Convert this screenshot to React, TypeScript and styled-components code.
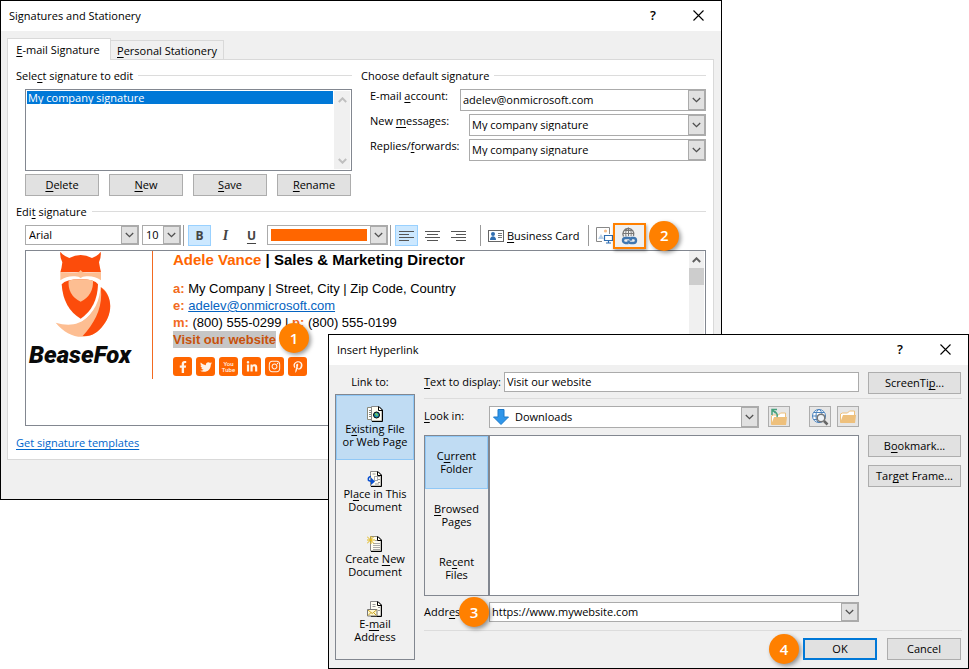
import React from "react";
import styled, { createGlobalStyle, css } from "styled-components";
import { FaFacebookF, FaTwitter, FaLinkedinIn, FaInstagram, FaPinterestP } from "react-icons/fa";

const GlobalStyle = createGlobalStyle`
  *, *::before, *::after { box-sizing: border-box; }
  body { margin: 0; background: #fff; }
  body, button, input, select {
    font-family: "Open Sans", "Noto Sans", sans-serif;
    font-size: 11px;
    line-height: 13px;
    color: #000;
  }
  u { text-underline-offset: 2px; text-decoration-thickness: 1px; text-decoration-skip-ink: none; }
`;

const Desktop = styled.main`
  display: grid;
  grid-template-columns: 328px minmax(0, 1fr) 247px;
  grid-template-rows: 334px 166px auto;
`;

const Window = styled.section<{ $front?: boolean }>`
  grid-column: ${(p) => (p.$front ? "2 / 4" : "1 / 3")};
  grid-row: ${(p) => (p.$front ? "2 / 4" : "1 / 3")};
  z-index: ${(p) => (p.$front ? 2 : 1)};
  min-width: 0;
  border: 1px solid #000;
  background: #f0f0f0;
`;

const TitleBar = styled.header`
  display: flex;
  align-items: center;
  height: 30px;
  padding: 0 13px 1px 8px;
  background: #fff;
`;

const WindowTitle = styled.h1`
  flex: 1;
  margin: 0;
  font-size: 11px;
  font-weight: 400;
`;

const TitleButton = styled.button`
  display: grid;
  place-items: center;
  width: 20px;
  height: 20px;
  padding: 0;
  border: 0;
  background: none;
  font-size: 13px;
  font-weight: 600;
  & + & { margin-left: 25px; }
`;

const SignatureBody = styled.div`
  padding: 7px 7px 39px 6px;
`;

const Tabs = styled.div`
  display: flex;
  align-items: flex-end;
  height: 21px;
`;

const Tab = styled.button<{ $active?: boolean }>`
  position: relative;
  height: ${(p) => (p.$active ? 22 : 19)}px;
  width: ${(p) => (p.$active ? 104 : 113)}px;
  margin: 0 0 ${(p) => (p.$active ? -1 : 0)}px;
  padding: ${(p) => (p.$active ? "0 2px 0 0" : "0")};
  border: 1px solid #d9d9d9;
  border-left-width: ${(p) => (p.$active ? 1 : 0)}px;
  border-bottom: 0;
  background: ${(p) => (p.$active ? "#fff" : "#f0f0f0")};
  white-space: nowrap;
`;

const Panel = styled.div`
  padding: 9px 7px 10px 8px;
  border: 1px solid #d9d9d9;
  background: #fff;
`;

const Columns = styled.div`
  display: grid;
  grid-template-columns: 336fr 345fr;
  gap: 9px;
  margin-bottom: 9px;
`;

const GroupTitle = styled.h2`
  display: flex;
  align-items: center;
  gap: 5px;
  margin: 0 0 7px;
  font-size: 11px;
  font-weight: 400;
  white-space: pre;
  &::after { content: ""; flex: 1; height: 1px; background: #dcdcdc; }
`;

const Indent = styled.div`
  padding-left: 9px;
`;

const ListBox = styled.div`
  display: flex;
  height: 82px;
  margin-bottom: 3px;
  padding: 1px;
  border: 1px solid #828790;
`;

const ListItems = styled.ul`
  flex: 1;
  margin: 0 1px 0 0;
  padding: 0;
  list-style: none;
`;

const ListItem = styled.li`
  padding-left: 1px;
  background: #0078d7;
  color: #fff;
`;

const ScrollBar = styled.div<{ $faded?: boolean }>`
  display: flex;
  flex-direction: column;
  justify-content: space-between;
  width: ${(p) => (p.$faded ? 16 : 15)}px;
  background: #f0f0f0;
  color: ${(p) => (p.$faded ? "#bfbfbf" : "#606060")};
`;

const ScrollArrow = styled.button`
  display: grid;
  place-items: center;
  height: 17px;
  padding: 0;
  border: 0;
  background: none;
  color: inherit;
`;

const ScrollThumb = styled.div`
  height: 17px;
  margin-bottom: auto;
  background: #cdcdcd;
`;

const ButtonRow = styled.div`
  display: grid;
  grid-template-columns: repeat(4, 1fr);
  gap: 10px;
  padding-right: 1px;
`;

const PushButton = styled.button<{ $primary?: boolean; $fixed?: boolean }>`
  height: 22px;
  padding: 0 0 2px;
  border: ${(p) => (p.$primary ? "2px solid #0078d7" : "1px solid #adadad")};
  background: #e1e1e1;
  white-space: nowrap;
  ${(p) => p.$fixed && css`width: 74px;`}
`;

const DefaultRow = styled.div<{ $wide?: boolean }>`
  display: grid;
  grid-template-columns: ${(p) => (p.$wide ? 90 : 99)}px minmax(0, 1fr);
  margin-bottom: 3px;
`;

const RowLabel = styled.label`
  white-space: nowrap;
`;

const ComboFrame = styled.div<{ $h?: number; $w?: number }>`
  display: grid;
  align-self: flex-start;
  ${(p) => (p.$w ? css`width: ${p.$w}px;` : css`flex: 1; min-width: 0;`)}
  height: ${(p) => p.$h ?? 22}px;
  border: 1px solid #ababab;
  background: #fff;
`;

const comboField = css`
  grid-area: 1 / 1;
  width: 100%;
  min-width: 0;
  height: 100%;
  margin: 0;
  border: 0;
  outline: 0;
  background: none;
`;

const ComboSelect = styled.select<{ $pad?: number }>`
  ${comboField}
  appearance: none;
  padding: 0 18px 2px ${(p) => p.$pad ?? 2}px;
`;

const ComboInput = styled.input`
  ${comboField}
  padding: 0 18px 2px 2px;
`;

const ColorButton = styled.button`
  ${comboField}
  padding: 3px 20px 3px 3px;
`;

const Swatch = styled.span`
  display: block;
  height: 12px;
  background: #ff6600;
`;

const ComboArrow = styled.span`
  grid-area: 1 / 1;
  justify-self: end;
  display: grid;
  place-items: center;
  width: 17px;
  border: 1px solid #ababab;
  background: #e1e1e1;
  color: #505050;
  pointer-events: none;
`;

const ComboIcon = styled.span`
  grid-area: 1 / 1;
  align-self: center;
  justify-self: start;
  height: 16px;
  margin-left: 3px;
  pointer-events: none;
`;

const Toolbar = styled.div`
  display: flex;
  align-items: center;
  height: 21px;
  margin-bottom: 4px;
`;

const Spacer = styled.span<{ $w: number }>`
  width: ${(p) => p.$w}px;
`;

const ToolDivider = styled.span`
  width: 1px;
  height: 21px;
  margin: 0 4px 0 2px;
  background: #9a9a9a;
`;

const ToolButton = styled.button<{ $on?: boolean; $gap?: number }>`
  display: grid;
  place-items: center;
  width: 23px;
  height: 21px;
  margin-right: ${(p) => p.$gap ?? 3}px;
  padding: 0;
  border: 1px solid ${(p) => (p.$on ? "#99d1ff" : "transparent")};
  background: ${(p) => (p.$on ? "#cce8ff" : "none")};
  color: #444;
  font-size: 12px;
  u { text-underline-offset: 3px; }
`;

const ItalicMark = styled.i`
  font-family: "Liberation Serif", serif;
  font-size: 14px;
  font-weight: 700;
`;

const CardButton = styled.button`
  display: flex;
  align-items: center;
  gap: 3px;
  margin: 0 7px 0 3px;
  padding: 0;
  border: 0;
  background: none;
  white-space: nowrap;
`;

const LinkButton = styled.button`
  display: grid;
  place-items: center;
  flex: none;
  width: 33px;
  height: 26px;
  padding: 0;
  border: 2px solid #ff8000;
  background: #f0f0f0;
  box-shadow: 1px 2px 3px rgba(0, 0, 0, 0.35);
`;

const Badge = styled.span`
  display: grid;
  place-items: center;
  flex: none;
  width: 30px;
  height: 30px;
  border-radius: 50%;
  background: #ff8000;
  box-shadow: 2px 2px 4px rgba(0, 0, 0, 0.4);
  color: #fff;
  font-family: "Open Sans", "Noto Sans", sans-serif;
  font-size: 15px;
  font-weight: 600;
`;

const WebsiteBadge = styled(Badge)`
  position: absolute;
  left: calc(100% + 3px);
  top: -8px;
`;

const AddressBadge = styled(Badge)`
  position: absolute;
  right: 0;
  top: -5px;
`;

const Editor = styled.div`
  display: flex;
  height: 176px;
  padding-right: 1px;
  border: 1px solid #828790;
`;

const Brand = styled.figure`
  display: flex;
  flex-direction: column;
  align-items: center;
  width: 127px;
  height: 128px;
  margin: 0;
  padding-right: 18px;
  border-right: 1px solid #f26a21;
`;

const BrandName = styled.figcaption`
  margin-top: 4px;
  font: italic 900 24px/24px Roboto, sans-serif;
  color: #0a0a0a;
`;

const SignatureText = styled.div`
  flex: 1;
  padding-left: 20px;
  font-family: "Liberation Sans", Arial, sans-serif;
  font-size: 13px;
  line-height: 17px;
`;

const PersonLine = styled.p`
  margin: 0 0 12px;
  font-size: 15px;
  font-weight: 700;
  line-height: 17px;
`;

const TextLine = styled.p`
  margin: 0;
`;

const Accent = styled.b`
  color: #f26a21;
`;

const Orange = styled.span`
  color: #ff6600;
`;

const MailLink = styled.a`
  color: #0563c1;
`;

const Selected = styled.a`
  position: relative;
  display: inline-block;
  background: #c6c6c6;
  color: #c8510a;
  font-weight: 700;
  text-decoration: none;
`;

const SocialRow = styled.div`
  display: flex;
  gap: 4px;
  margin-top: 9px;
`;

const Social = styled.a`
  display: grid;
  place-items: center;
  width: 19px;
  height: 19px;
  border-radius: 3px;
  background: #ff6600;
  color: #fff3e8;
  font: 500 6px/6px Roboto, sans-serif;
  text-align: center;
  text-decoration: none;
`;

const TemplatesLink = styled.a`
  display: inline-block;
  margin-top: 10px;
  color: #0066cc;
  text-underline-offset: 2px;
  text-decoration-skip-ink: none;
`;

const HyperlinkBody = styled.div`
  display: grid;
  grid-template-columns: 80px minmax(0, 1fr);
  gap: 9px;
  padding: 7px 6px 8px 6px;
`;

const Sidebar = styled.nav`
  display: flex;
  flex-direction: column;
`;

const SidebarTitle = styled.h2`
  margin: 3px 10px 6px 0;
  font-size: 11px;
  font-weight: 400;
  text-align: center;
`;

const Choices = styled.div`
  flex: 1;
  display: flex;
  flex-direction: column;
  border: 1px solid #828790;
`;

const Choice = styled.button<{ $on?: boolean; $compact?: boolean }>`
  display: flex;
  flex-direction: column;
  align-items: center;
  justify-content: center;
  height: ${(p) => (p.$compact ? 53 : 65)}px;
  padding: 0 0 2px;
  border: 1px solid ${(p) => (p.$on ? "#90c8f6" : "transparent")};
  background: ${(p) => (p.$on ? "#c0dcf3" : "none")};
  white-space: nowrap;
`;

const Form = styled.form`
  display: flex;
  flex-direction: column;
`;

const FormRow = styled.div<{ $gap?: number }>`
  display: grid;
  grid-template-columns: minmax(0, 1fr) 93px;
  gap: 9px;
  margin-bottom: ${(p) => p.$gap ?? 0}px;
  padding-right: 1px;
`;

const Field = styled.div`
  display: flex;
  align-items: flex-start;
`;

const FieldLabel = styled.label<{ $w: number }>`
  position: relative;
  flex: none;
  width: ${(p) => p.$w}px;
  padding-top: 3px;
  white-space: nowrap;
`;

const TextInput = styled.input`
  flex: 1;
  min-width: 0;
  height: 20px;
  padding: 0 2px 2px;
  border: 1px solid #ababab;
  background: #fff;
`;

const Rule = styled.hr<{ $gap: number }>`
  width: 100%;
  height: 1px;
  margin: 0 0 ${(p) => p.$gap}px;
  border: 0;
  background: #dcdcdc;
`;

const IconButton = styled.button<{ $before: number }>`
  display: grid;
  place-items: center;
  flex: none;
  width: 22px;
  height: 21px;
  margin-left: ${(p) => p.$before}px;
  padding: 0;
  border: 1px solid #adadad;
  background: #e6e6e6;
`;

const Browser = styled.div`
  display: grid;
  grid-template-columns: 65px minmax(0, 1fr);
  height: 161px;
`;

const FileList = styled.div`
  border: 1px solid #828790;
  background: #fff;
`;

const SideButtons = styled.div`
  display: flex;
  flex-direction: column;
  gap: 8px;
`;

const Footer = styled.footer`
  display: flex;
  align-items: center;
  justify-content: flex-end;
  gap: 10px;
  padding-right: 1px;
`;

const OkGroup = styled.div`
  display: flex;
  align-items: center;
  gap: 4px;
  height: 22px;
`;

const Chevron = ({ up, bold }: { up?: boolean; bold?: boolean }) => (
  <svg width="9" height="6" viewBox="0 0 9 6" fill="none" stroke="currentColor" strokeWidth={bold ? 2 : 1.3}>
    <path d={up ? "M.8 5 4.5 1.3 8.2 5" : "M.8 1 4.5 4.7 8.2 1"} />
  </svg>
);

const CloseIcon = () => (
  <svg width="11" height="11" viewBox="0 0 11 11" stroke="#000" strokeWidth="1.1">
    <path d="M.5.5l10 10M10.5.5l-10 10" />
  </svg>
);

const AlignIcon = ({ x }: { x: [number, number] }) => (
  <svg width="15" height="12" viewBox="0 0 15 12" stroke="#555" strokeWidth="1">
    <path d={`M0 1.5h15M${x[0]} 4.5h${x[1]}M0 7.5h15M${x[0]} 10.5h${x[1]}`} />
  </svg>
);

const CardIcon = () => (
  <svg width="16" height="12" viewBox="0 0 16 12">
    <rect x=".5" y=".5" width="15" height="11" fill="#fff" stroke="#666" />
    <circle cx="5" cy="4" r="2" fill="#2f6db0" />
    <path d="M2 10c0-5 6-5 6 0z" fill="#2f6db0" />
    <path d="M10 3.5h4M10 5.5h4M10 7.5h4" stroke="#777" />
  </svg>
);

const PictureIcon = () => (
  <svg width="17" height="17" viewBox="0 0 17 17">
    <path d="M6 14.5H.5V.5h13V7" fill="#fff" stroke="#888" />
    <path d="M2 12l3-5 3 5z" fill="#b9cfe6" />
    <circle cx="9.5" cy="4" r="1.6" fill="#f6bd8a" />
    <path d="M8.5 8.5h8v5h-8zM12.5 14v2M10 16h5" fill="#fff" stroke="#2f6db0" strokeWidth="1.2" />
  </svg>
);

const GlobeLinkIcon = () => (
  <svg width="17" height="18" viewBox="0 0 17 18" fill="none">
    <g stroke="#777">
      <path d="M2.500 9.500A5.500 5.500 0 1 1 12.500 9" strokeWidth="1.300" />
      <path d="M5 9.500C4 3.500 6.200 1 7.500 1s3.500 3.500 2.500 8M2 6.500h11M3.500 3.500h8M7.500 1v8" />
    </g>
    <g stroke="#3f76b0" strokeWidth="2.400">
      <path d="M7.500 16H4.500a2.500 2.500 0 0 1 0-5h3.300q2 0 2.300 2.600" />
      <path d="M9.500 11h3a2.500 2.500 0 0 1 0 5H9.800q-2.200 0-2.500-2.600" />
    </g>
  </svg>
);

const Fox = () => (
  <svg width="63" height="88" viewBox="102 16 189 264" role="img" aria-label="Fox">
    <path d="M257 124c31 14 43 80 2 122-42 44-98 32-137-15 58 17 113 3 135-107z" fill="#fdbe92" />
    <path d="M257 124c42 31 34 88 2 122-20 22-36 26-56 25 38-42 62-88 54-147z" fill="#fc4c0b" />
    <path d="M140 116q12-15 57-15 42 0 52 15-2 70-52 103-52-30-57-103z" fill="#fc4c0b" stroke="#fff" strokeWidth="16" strokeLinejoin="round" />
    <path d="M140 116q12-15 57-15 42 0 52 15-2 70-52 103-52-30-57-103z" fill="#fc4c0b" />
    <path d="M161 105q12-4 36-4t37 4q2 43-37 63-40-20-36-63z" fill="#fdbe92" />
    <path d="M136 18q9 13 27 19 34-18 68 0 18-6 26-19 2 18-5 32 3 18 6 30H136q4-12 6-30-8-15-6-32z" fill="#fc4c0b" />
    <path d="M136 80q27 2 43 2 13 0 18-9 5 9 18 9 16 0 43-2v24q-20-14-44-12-12 1-17 5-5-4-17-5-24-2-44 12z" fill="#fdbe92" />
  </svg>
);

const DownArrow = () => (
  <svg width="16" height="16" viewBox="0 0 16 16">
    <path d="M5 .5h6V8h4.500L8 15.500.5 8H5z" fill="#2f96ea" stroke="#1d78c8" />
  </svg>
);

const FolderShape = ({ y }: { y: number }) => (
  <g>
    <path d={`M1.500 ${y + 11}V${y + 3}l2-1h5l2-2h5v4`} fill="#fff" stroke="#eec07c" />
    <path d={`M1 ${y + 12}l3-8 h13 l-1 8z`} fill="#eec07c" />
  </g>
);

const UpFolderIcon = () => (
  <svg width="18" height="18" viewBox="0 0 18 18">
    <FolderShape y={5} />
    <path d="M7 9C8 6 6 3.500 3 3M2 7V1.500h5M2.500 2l3 3" fill="none" stroke="#46a17c" strokeWidth="1.500" />
  </svg>
);

const FolderIcon = () => (
  <svg width="18" height="16" viewBox="0 0 18 16"><FolderShape y={2} /></svg>
);

const SearchWebIcon = () => (
  <svg width="18" height="18" viewBox="0 0 18 18" fill="none">
    <circle cx="8" cy="8" r="6.500" fill="#fff" />
    <g stroke="#4a82bd">
      <circle cx="8" cy="8" r="6.500" />
      <ellipse cx="8" cy="8" rx="3" ry="6.500" />
      <path d="M1.500 8h13M3 4.500h10M3 11.500h10" />
    </g>
    <circle cx="10" cy="10" r="3.800" fill="#eef3f8" stroke="#777" strokeWidth="1.500" />
    <path d="M13 13l3.500 3.500" stroke="#666" strokeWidth="2.500" />
  </svg>
);

const Page = ({ x = 4 }: { x?: number }) => (
  <g>
    <path d={`M${x + 0.5} .5h7l3.500 3.500v11h-10.500z`} fill="#fffdf2" stroke="#8a8a8a" />
    <path d={`M${x + 8} .5l3.500 3.500v11.500H${x + 1}M${x + 7.5} .5v4h4`} fill="none" stroke="#000" />
  </g>
);

const ExistingIcon = () => (
  <svg width="16" height="16" viewBox="0 0 16 16">
    <path d="M.5 1.500h6v12h-6zM2 4.500h2M2 6.500h2M2 8.500h2M2 10.500h2" fill="#fff" stroke="#8a8a7a" />
    <Page />
    <circle cx="9.500" cy="9" r="3" fill="#1c8fb0" stroke="#000" />
    <path d="M8 8h2v2" fill="none" stroke="#a6e22e" />
  </svg>
);

const PlaceIcon = () => (
  <svg width="16" height="16" viewBox="0 0 16 16">
    <Page x={3} />
    <path d="M5.500 3h3M11 5.500h2M11 8.500h2M11 11.500h2M8 13h4" stroke="#999" />
    <rect x="7.500" y="5.500" width="3" height="4" fill="#fff" stroke="#aaa" />
    <path d="M4 5.500Q.5 6 1.500 9.500l3 1" stroke="#0a50d0" strokeWidth="1.500" fill="none" />
    <path d="M4 6.500l4 4L4 14z" fill="#0a50d0" />
  </svg>
);

const NewIcon = () => (
  <svg width="16" height="16" viewBox="0 0 16 16">
    <Page x={3} />
    <path d="M6 7.500h7M6 9.500h7M6 11.500h7M6 13.500h7M8 4.500h2" stroke="#aaa" />
    <path d="M4 0v8M0 4h8M0 .5l7 7M7 .5l-7 7" stroke="#e2b714" />
  </svg>
);

const MailIcon = () => (
  <svg width="16" height="16" viewBox="0 0 16 16">
    <Page x={3} />
    <path d="M5.500 3.500h3M5.500 5.500h3M11 6.500h2M11 9.500h2" stroke="#999" />
    <path d="M.5 8.500h9.500v6.500H.5z" fill="#fff8d0" stroke="#777" />
    <path d="M1 9l4.200 3.500L9.500 9M1 14.500l3-3M9.500 14.500l-3-3" fill="none" stroke="#c9a227" />
  </svg>
);

const TitleControls = () => (
  <>
    <TitleButton type="button" aria-label="Help">?</TitleButton>
    <TitleButton type="button" aria-label="Close"><CloseIcon /></TitleButton>
  </>
);

type ComboProps = { id?: string; label?: string; value: string; h?: number; w?: number; pad?: number; icon?: React.ReactNode };

const Combo = ({ id, label, value, h, w, pad, icon }: ComboProps) => (
  <ComboFrame $h={h} $w={w}>
    {icon && <ComboIcon>{icon}</ComboIcon>}
    <ComboSelect id={id} aria-label={label} $pad={pad} defaultValue={value}>
      <option>{value}</option>
    </ComboSelect>
    <ComboArrow><Chevron /></ComboArrow>
  </ComboFrame>
);

const socials = [
  { name: "Facebook", icon: <FaFacebookF size={12} /> },
  { name: "Twitter", icon: <FaTwitter size={12} /> },
  { name: "YouTube", icon: <span>You<br />Tube</span> },
  { name: "LinkedIn", icon: <FaLinkedinIn size={12} /> },
  { name: "Instagram", icon: <FaInstagram size={13} /> },
  { name: "Pinterest", icon: <FaPinterestP size={12} /> },
];

const SignaturesWindow = () => (
  <Window aria-label="Signatures and Stationery">
    <TitleBar>
      <WindowTitle>Signatures and Stationery</WindowTitle>
      <TitleControls />
    </TitleBar>
    <SignatureBody>
      <Tabs role="tablist">
        <Tab type="button" role="tab" aria-selected $active><u>E</u>-mail Signature</Tab>
        <Tab type="button" role="tab" aria-selected={false}><u>P</u>ersonal Stationery</Tab>
      </Tabs>
      <Panel>
        <Columns>
          <div>
            <GroupTitle><span>Sele<u>c</u>t signature to edit</span></GroupTitle>
            <Indent>
              <ListBox>
                <ListItems role="listbox" aria-label="Signatures">
                  <ListItem role="option" aria-selected>My company signature</ListItem>
                </ListItems>
                <ScrollBar $faded>
                  <ScrollArrow type="button" aria-label="Scroll up"><Chevron up bold /></ScrollArrow>
                  <ScrollArrow type="button" aria-label="Scroll down"><Chevron bold /></ScrollArrow>
                </ScrollBar>
              </ListBox>
              <ButtonRow>
                <PushButton type="button"><u>D</u>elete</PushButton>
                <PushButton type="button"><u>N</u>ew</PushButton>
                <PushButton type="button"><u>S</u>ave</PushButton>
                <PushButton type="button"><u>R</u>ename</PushButton>
              </ButtonRow>
            </Indent>
          </div>
          <div>
            <GroupTitle>Choose default signature</GroupTitle>
            <Indent>
              <DefaultRow $wide>
                <RowLabel htmlFor="account">E-mail <u>a</u>ccount:</RowLabel>
                <Combo id="account" value="adelev@onmicrosoft.com" />
              </DefaultRow>
              <DefaultRow>
                <RowLabel htmlFor="new-messages">New <u>m</u>essages:</RowLabel>
                <Combo id="new-messages" value="My company signature" />
              </DefaultRow>
              <DefaultRow>
                <RowLabel htmlFor="replies">Replies/<u>f</u>orwards:</RowLabel>
                <Combo id="replies" value="My company signature" />
              </DefaultRow>
            </Indent>
          </div>
        </Columns>
        <GroupTitle><span>Edi<u>t</u> signature</span></GroupTitle>
        <Indent>
          <Toolbar>
            <Combo label="Font" value="Arial" h={20} w={114} pad={3} />
            <Spacer $w={3} />
            <Combo label="Font size" value="10" h={20} w={39} pad={3} />
            <ToolDivider />
            <ToolButton type="button" aria-label="Bold" $on><b>B</b></ToolButton>
            <ToolButton type="button" aria-label="Italic"><ItalicMark>I</ItalicMark></ToolButton>
            <ToolButton type="button" aria-label="Underline" $gap={4}><b><u>U</u></b></ToolButton>
            <ComboFrame $h={20} $w={121}>
              <ColorButton type="button" aria-label="Font color"><Swatch /></ColorButton>
              <ComboArrow><Chevron /></ComboArrow>
            </ComboFrame>
            <ToolDivider />
            <ToolButton type="button" aria-label="Align left" $on><AlignIcon x={[0, 10]} /></ToolButton>
            <ToolButton type="button" aria-label="Align center"><AlignIcon x={[2, 11]} /></ToolButton>
            <ToolButton type="button" aria-label="Align right" $gap={8}><AlignIcon x={[5, 10]} /></ToolButton>
            <ToolDivider />
            <CardButton type="button"><CardIcon /><span><u>B</u>usiness Card</span></CardButton>
            <ToolDivider />
            <ToolButton type="button" aria-label="Insert picture" $gap={-3}><PictureIcon /></ToolButton>
            <LinkButton type="button" aria-label="Insert hyperlink"><GlobeLinkIcon /></LinkButton>
            <Spacer $w={3} />
            <Badge>2</Badge>
          </Toolbar>
          <Editor>
            <Brand>
              <Fox />
              <BrandName>BeaseFox</BrandName>
            </Brand>
            <SignatureText>
              <PersonLine><Orange>Adele Vance</Orange> | Sales &amp; Marketing Director</PersonLine>
              <TextLine><Accent>a:</Accent> My Company | Street, City | Zip Code, Country</TextLine>
              <TextLine><Accent>e:</Accent> <MailLink href="#mail">adelev@onmicrosoft.com</MailLink></TextLine>
              <TextLine><Accent>m:</Accent> (800) 555-0299 | <Accent>p:</Accent> (800) 555-0199</TextLine>
              <TextLine>
                <Selected href="#website">Visit our website<WebsiteBadge>1</WebsiteBadge></Selected>
              </TextLine>
              <SocialRow>
                {socials.map((s) => (
                  <Social key={s.name} href={`#${s.name}`} aria-label={s.name}>{s.icon}</Social>
                ))}
              </SocialRow>
            </SignatureText>
            <ScrollBar>
              <ScrollArrow type="button" aria-label="Scroll up"><Chevron up bold /></ScrollArrow>
              <ScrollThumb />
            </ScrollBar>
          </Editor>
        </Indent>
        <TemplatesLink href="#templates">Get signature templates</TemplatesLink>
      </Panel>
    </SignatureBody>
  </Window>
);

const HyperlinkWindow = () => (
  <Window $front aria-label="Insert Hyperlink">
    <TitleBar>
      <WindowTitle>Insert Hyperlink</WindowTitle>
      <TitleControls />
    </TitleBar>
    <HyperlinkBody>
      <Sidebar>
        <SidebarTitle>Link to:</SidebarTitle>
        <Choices>
          <Choice type="button" $on><ExistingIcon /><span>E<u>x</u>isting File<br />or Web Page</span></Choice>
          <Choice type="button"><PlaceIcon /><span>Pl<u>a</u>ce in This<br />Document</span></Choice>
          <Choice type="button"><NewIcon /><span>Create <u>N</u>ew<br />Document</span></Choice>
          <Choice type="button"><MailIcon /><span>E-<u>m</u>ail<br />Address</span></Choice>
        </Choices>
      </Sidebar>
      <Form>
        <FormRow $gap={4}>
          <Field>
            <FieldLabel $w={80} htmlFor="display"><u>T</u>ext to display:</FieldLabel>
            <TextInput id="display" defaultValue="Visit our website" />
          </Field>
          <PushButton type="button">ScreenTi<u>p</u>...</PushButton>
        </FormRow>
        <Rule $gap={7} />
        <FormRow $gap={7}>
          <Field>
            <FieldLabel $w={65} htmlFor="look"><u>L</u>ook in:</FieldLabel>
            <Combo id="look" value="Downloads" pad={25} icon={<DownArrow />} />
            <IconButton type="button" aria-label="Up one folder" $before={9}><UpFolderIcon /></IconButton>
            <IconButton type="button" aria-label="Browse the web" $before={19}><SearchWebIcon /></IconButton>
            <IconButton type="button" aria-label="Browse for file" $before={6}><FolderIcon /></IconButton>
          </Field>
        </FormRow>
        <FormRow $gap={6}>
          <Browser>
            <Choices>
              <Choice type="button" $compact $on><span>C<u>u</u>rrent<br />Folder</span></Choice>
              <Choice type="button" $compact><span><u>B</u>rowsed<br />Pages</span></Choice>
              <Choice type="button" $compact><span>Re<u>c</u>ent<br />Files</span></Choice>
            </Choices>
            <FileList />
          </Browser>
          <SideButtons>
            <PushButton type="button">B<u>o</u>okmark...</PushButton>
            <PushButton type="button">Tar<u>g</u>et Frame...</PushButton>
          </SideButtons>
        </FormRow>
        <FormRow $gap={8}>
          <Field>
            <FieldLabel $w={65} htmlFor="address">Addr<u>e</u>ss:<AddressBadge>3</AddressBadge></FieldLabel>
            <ComboFrame $h={20}>
              <ComboInput id="address" defaultValue="https://www.mywebsite.com" />
              <ComboArrow><Chevron /></ComboArrow>
            </ComboFrame>
          </Field>
        </FormRow>
        <Rule $gap={7} />
        <Footer>
          <OkGroup>
            <Badge>4</Badge>
            <PushButton type="button" $primary $fixed>OK</PushButton>
          </OkGroup>
          <PushButton type="button" $fixed>Cancel</PushButton>
        </Footer>
      </Form>
    </HyperlinkBody>
  </Window>
);

export default function App() {
  return (
    <>
      <GlobalStyle />
      <Desktop>
        <SignaturesWindow />
        <HyperlinkWindow />
      </Desktop>
    </>
  );
}
